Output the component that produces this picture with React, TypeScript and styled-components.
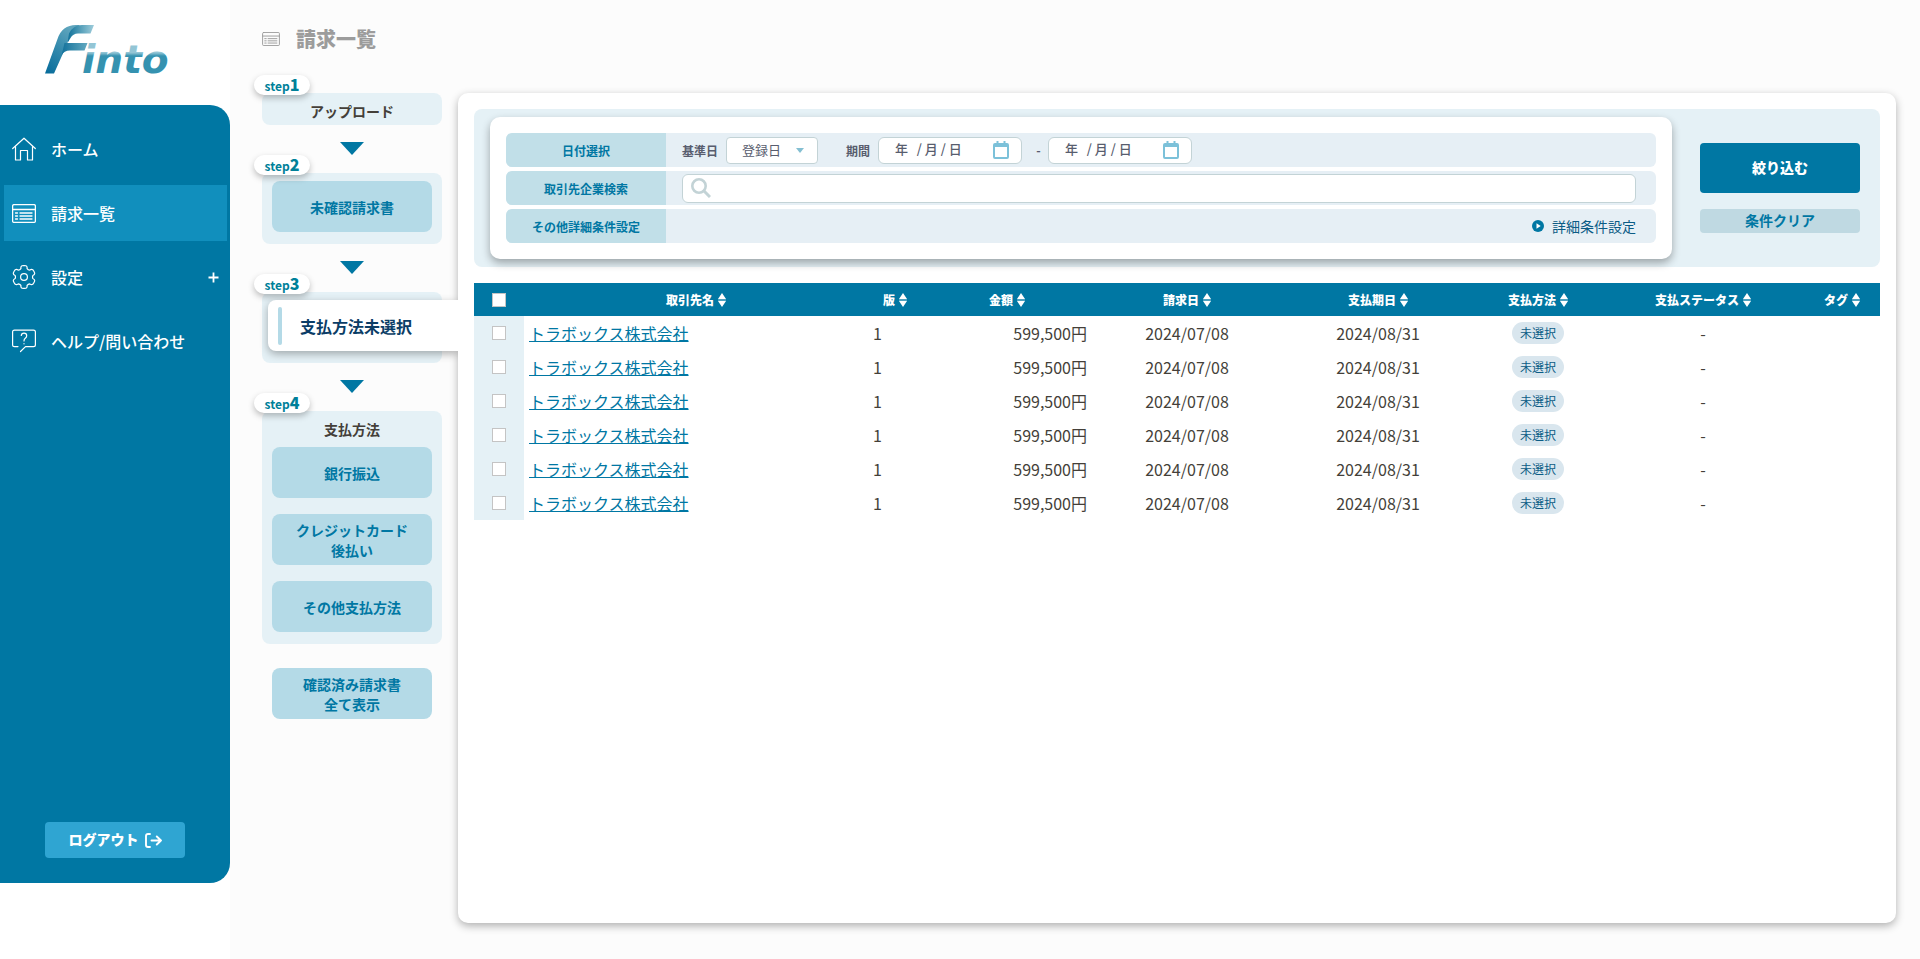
import React from "react";
import styled, { createGlobalStyle, css } from "styled-components";

const color = {
  primary: "#0077a3",
  primaryActive: "#118fbd",
  navy: "#0b3d66",
  teal: "#008099",
  text: "#443f39",
  formText: "#585d6e",
  pale: "#e5f1f6",
  rowPale: "#e6eff5",
  button: "#b4dae7",
  label: "#c1dfe8",
  border: "#c3d3d6",
};

const GlobalStyle = createGlobalStyle`
  *, *::before, *::after { box-sizing: border-box; }
  body {
    margin: 0;
    background: #fcfcfc;
    color: ${color.text};
    font-family: "Noto Sans CJK JP", "Noto Sans", sans-serif;
    font-size: 16px;
    line-height: 24px;
  }
  button, input, select { font-family: inherit; margin: 0; }
  h1, p { margin: 0; }
`;

const Layout = styled.div`
  display: flex;
  min-height: 100vh;
`;

/* ---------- Sidebar ---------- */

const Sidebar = styled.aside`
  display: flex;
  flex-direction: column;
  flex: none;
  width: 230px;
  padding-bottom: 76px;
  background: #fff;
`;

const LogoLink = styled.a`
  display: block;
  height: 105px;
  padding: 20px 0 0 40px;
  svg { display: block; }
`;

const NavPanel = styled.nav`
  display: flex;
  flex: 1;
  flex-direction: column;
  justify-content: space-between;
  padding: 16px 0 25px;
  border-radius: 0 20px 20px 0;
  background: ${color.primary};
`;

const NavList = styled.ul`
  display: flex;
  flex-direction: column;
  gap: 8px;
  margin: 0;
  padding: 0 3px 0 4px;
  list-style: none;
`;

const NavLink = styled.a<{ $active?: boolean }>`
  display: flex;
  align-items: center;
  gap: 15px;
  height: 56px;
  padding: 0 8px;
  color: #fff;
  font-weight: 500;
  text-decoration: none;
  background: ${(p) => (p.$active ? color.primaryActive : "transparent")};
  svg { flex: none; }
`;

const NavText = styled.span`
  flex: 1;
`;

const LogoutButton = styled.button`
  display: flex;
  align-items: center;
  justify-content: center;
  gap: 6px;
  align-self: center;
  width: 140px;
  height: 36px;
  padding: 0 0 2px;
  border: 0;
  border-radius: 4px;
  background: #2fa5d2;
  color: #fff;
  font-size: 14px;
  font-weight: 900;
  svg { margin-top: 2px; }
`;

/* ---------- Main ---------- */

const Main = styled.main`
  display: flex;
  flex: 1;
  flex-direction: column;
  min-width: 0;
  padding: 24px 24px 36px 32px;
`;

const PageHeader = styled.header`
  display: flex;
  align-items: center;
  gap: 16px;
  height: 30px;
  color: #9c9c9c;
`;

const PageTitle = styled.h1`
  font-size: 20px;
  font-weight: 900;
  line-height: 30px;
`;

const Body = styled.div`
  display: flex;
  flex: 1;
  gap: 16px;
  margin-top: 39px;
`;

/* ---------- Steps ---------- */

const Steps = styled.div`
  display: flex;
  flex: none;
  flex-direction: column;
  width: 180px;
`;

const StepBox = styled.section<{ $title?: boolean }>`
  position: relative;
  display: flex;
  flex-direction: column;
  gap: 16px;
  padding: 8px 10px 12px;
  border-radius: 8px;
  background: ${color.pale};
  ${(p) => p.$title && css`padding: 6px 10px 2px;`}
`;

const StepBadge = styled.span`
  position: absolute;
  top: -18px;
  left: -8px;
  width: 56px;
  height: 20px;
  border-radius: 10px;
  background: #fff;
  box-shadow: 0 3px 6px rgba(0, 0, 0, 0.25);
  color: ${color.teal};
  font-size: 12px;
  font-weight: 700;
  line-height: 18px;
  text-align: center;
  b { font-size: 16px; }
`;

const StepTitle = styled.p`
  font-size: 14px;
  font-weight: 700;
  text-align: center;
`;

const MethodGroup = styled.div`
  display: flex;
  flex-direction: column;
  gap: 8px;
  ${StepTitle} { line-height: 20px; }
`;

const StepButton = styled.button`
  width: 160px;
  height: 51px;
  padding: 0;
  border: 0;
  border-radius: 8px;
  background: ${color.button};
  color: ${color.primary};
  font-size: 14px;
  font-weight: 700;
  line-height: 20px;
`;

const CurrentStepButton = styled.button`
  position: relative;
  z-index: 2;
  display: flex;
  align-items: center;
  gap: 18px;
  height: 51px;
  margin: 0 -26px 0 -4px;
  padding: 0 10px;
  border: 0;
  border-radius: 8px 0 0 8px;
  background: #fff;
  box-shadow: 0 3px 8px rgba(0, 0, 0, 0.3);
  clip-path: inset(-12px 0 -16px -12px);
  color: ${color.navy};
  font-size: 16px;
  font-weight: 700;
  &::before {
    content: "";
    width: 4px;
    height: 38px;
    border-radius: 2px;
    background: ${color.button};
  }
`;

const StepArrow = styled.div`
  display: flex;
  justify-content: center;
  height: 48px;
  padding-top: 17px;
  &::before {
    content: "";
    height: 0;
    border: 12px solid transparent;
    border-top: 13px solid ${color.primary};
    border-bottom: 0;
  }
`;

const AllInvoices = styled.div`
  padding: 24px 10px 0;
`;

/* ---------- Card and filter ---------- */

const Card = styled.section`
  position: relative;
  z-index: 1;
  flex: 1;
  min-width: 0;
  padding: 16px;
  border-radius: 10px;
  background: #fff;
  box-shadow: 0 3px 8px rgba(0, 0, 0, 0.3);
`;

const Filter = styled.form`
  display: flex;
  gap: 28px;
  padding: 8px 20px 8px 16px;
  border-radius: 8px;
  background: ${color.pale};
`;

const FilterPanel = styled.div`
  display: flex;
  flex: 1;
  flex-direction: column;
  gap: 4px;
  min-width: 0;
  padding: 16px;
  border-radius: 10px;
  background: #fff;
  box-shadow: 0 4px 8px rgba(0, 0, 0, 0.32);
`;

const FilterRow = styled.div`
  display: flex;
  height: 34px;
  border-radius: 6px;
  overflow: hidden;
  background: ${color.rowPale};
`;

const FilterLabel = styled.label`
  flex: none;
  width: 160px;
  padding-top: 1px;
  background: ${color.label};
  color: ${color.primary};
  font-size: 12px;
  font-weight: 700;
  line-height: 34px;
  text-align: center;
`;

const FilterContent = styled.div<{ $end?: boolean }>`
  display: flex;
  flex: 1;
  align-items: center;
  justify-content: ${(p) => (p.$end ? "flex-end" : "flex-start")};
  padding: 0 20px 0 16px;
`;

const FieldLabel = styled.label`
  margin-right: 8px;
  padding-top: 1px;
  color: ${color.formText};
  font-size: 12px;
  font-weight: 700;
`;

const SelectWrap = styled.div`
  position: relative;
  margin-right: 28px;
  &::after {
    content: "";
    position: absolute;
    top: 11px;
    right: 14px;
    border: 4px solid transparent;
    border-top: 5px solid #84bfd2;
    border-bottom: 0;
    pointer-events: none;
  }
`;

const Select = styled.select`
  display: block;
  width: 92px;
  height: 27px;
  padding: 0 0 2px 15px;
  appearance: none;
  border: 1px solid ${color.border};
  border-radius: 4px;
  background: #fff;
  color: ${color.formText};
  font-size: 13px;
`;

const DateField = styled.div`
  display: flex;
  align-items: center;
  width: 144px;
  height: 27px;
  padding: 0 12px 0 16px;
  border: 1px solid ${color.border};
  border-radius: 6px;
  background: #fff;
  svg { flex: none; }
`;

const DateInput = styled.input`
  flex: 1;
  min-width: 0;
  padding: 0 0 2px;
  border: 0;
  background: transparent;
  font-size: 13px;
  font-weight: 500;
  line-height: 20px;
  outline: none;
  &::placeholder { color: ${color.formText}; opacity: 1; white-space: pre; }
`;

const RangeDash = styled.span`
  width: 26px;
  padding-left: 7px;
  color: ${color.formText};
  font-size: 12px;
  font-weight: 700;
  text-align: center;
`;

const SearchField = styled.div`
  display: flex;
  flex: 1;
  align-items: center;
  gap: 8px;
  height: 29px;
  padding: 0 8px;
  border: 1px solid ${color.border};
  border-radius: 6px;
  background: #fff;
`;

const SearchInput = styled.input`
  flex: 1;
  height: 24px;
  padding: 0;
  border: 0;
  outline: none;
  background: transparent;
  font-size: 14px;
`;

const DetailButton = styled.button`
  display: flex;
  align-items: center;
  gap: 8px;
  padding: 0;
  border: 0;
  background: none;
  color: #0b5c85;
  font-size: 14px;
`;

const FilterActions = styled.div`
  display: flex;
  flex: none;
  flex-direction: column;
  gap: 16px;
  width: 160px;
  padding-top: 26px;
`;

const SubmitButton = styled.button`
  height: 50px;
  padding: 0 0 2px;
  border: 0;
  border-radius: 4px;
  background: ${color.primary};
  color: #fff;
  font-size: 14px;
  font-weight: 900;
`;

const ClearButton = styled.button`
  height: 24px;
  padding: 0 0 2px;
  border: 0;
  border-radius: 4px;
  background: #bfd9e2;
  color: ${color.primary};
  font-size: 14px;
  font-weight: 700;
  line-height: 20px;
`;

/* ---------- Table ---------- */

const Table = styled.table`
  width: 100%;
  margin-top: 16px;
  border-collapse: collapse;
  table-layout: fixed;
`;

const HeadCell = styled.th`
  height: 33px;
  padding: 0;
  background: ${color.primary};
  color: #fff;
  font-size: 12px;
  font-weight: 700;
  line-height: 20px;
`;

const SortButton = styled.button`
  display: inline-flex;
  align-items: center;
  gap: 4px;
  padding: 0;
  border: 0;
  background: none;
  color: inherit;
  font-size: 12px;
  font-weight: 900;
  line-height: 20px;
  white-space: nowrap;
`;

const Cell = styled.td<{ $align?: "left" | "center" | "right" }>`
  height: 34px;
  padding: 0 5px;
  text-align: ${(p) => p.$align || "center"};
  white-space: nowrap;
`;

const CheckCell = styled.td`
  padding: 0;
  background: ${color.pale};
  text-align: center;
`;

const Checkbox = styled.input.attrs({ type: "checkbox" })`
  display: block;
  width: 14px;
  height: 14px;
  margin: 0 auto;
  appearance: none;
  border: 1px solid #c4c4c4;
  background: #fff;
  &:checked { background: ${color.primaryActive}; }
`;

const CompanyLink = styled.a`
  color: ${color.primary};
  text-decoration: underline;
`;

const StatusPill = styled.span`
  display: block;
  width: 52px;
  height: 22px;
  margin: 0 auto;
  border-radius: 11px;
  background: #d9e6ee;
  color: #0b5c85;
  font-size: 12px;
  line-height: 22px;
`;

/* ---------- Icons ---------- */

const Logo = () => (
  <svg width="150" height="72" viewBox="40 20 150 72" role="img" aria-label="Finto">
    <defs>
      <linearGradient id="stem" x1="0" y1="1" x2="0.6" y2="0">
        <stop offset="0" stopColor="#056b9a" />
        <stop offset="0.5" stopColor="#2f87ab" />
        <stop offset="1" stopColor="#5fa5bd" />
      </linearGradient>
      <linearGradient id="ribbon" x1="0" y1="0" x2="1" y2="0">
        <stop offset="0" stopColor="#0f7099" />
        <stop offset="0.4" stopColor="#4796b3" />
        <stop offset="1" stopColor="#9fcddb" />
      </linearGradient>
      <linearGradient id="wing" x1="0" y1="0" x2="1" y2="0">
        <stop offset="0" stopColor="#12719b" />
        <stop offset="1" stopColor="#64a9c0" />
      </linearGradient>
      <linearGradient id="word" x1="0" y1="0" x2="0" y2="1">
        <stop offset="0.35" stopColor="#93c5d5" />
        <stop offset="0.42" stopColor="#3592b0" />
      </linearGradient>
    </defs>
    <path d="M45 73.500L57.500 39Q62 25 76 25H80Q72 30 68 41L64.500 50L54 73.500Z" fill="url(#stem)" />
    <path d="M69 33.500Q73 25 82 25H94L90.500 33.500H78Q73 33.500 70.500 38L67.500 43Z" fill="url(#ribbon)" />
    <path d="M64.500 43H87.500L84.500 50.500H70Q64 50.500 61.500 55.500Z" fill="url(#wing)" />
    <text
      x="82"
      y="73"
      fill="url(#word)"
      fontFamily="DejaVu Sans, sans-serif"
      fontSize="39"
      fontStyle="oblique"
      fontWeight="700"
    >
      into
    </text>
  </svg>
);

const HomeIcon = () => (
  <svg width="24" height="24" viewBox="0 0 24 24" fill="none" stroke="currentColor" strokeWidth="1.200" strokeLinejoin="round" strokeLinecap="round">
    <path d="M.7 11.500L12 1.200L23.300 11.500" />
    <path d="M3.500 9.500V23H8.500V13.500H15.500V23H20.500V9.500" />
  </svg>
);

const ListIcon = ({ width = 24 }: { width?: number }) => (
  <svg width={width} height={Math.round((width * 19) / 24)} viewBox="0 0 24 19" fill="none" stroke="currentColor" strokeWidth="1.300" strokeLinecap="round">
    <rect x=".6" y=".6" width="22.800" height="17.800" rx="1.500" />
    <path d="M.6 5.500H23.400M3.500 9H5.500M8 9H20M3.500 12H5.500M8 12H20M3.500 15H5.500M8 15H20" />
  </svg>
);

const polar = (radius: number, degrees: number) => {
  const a = (degrees * Math.PI) / 180;
  return `${(12 + radius * Math.cos(a)).toFixed(2)} ${(12 + radius * Math.sin(a)).toFixed(2)}`;
};

const gearPath =
  [0, 1, 2, 3, 4, 5]
    .map((k) => {
      const a = k * 60 - 90;
      return `${k ? "L" : "M"}${polar(9, a - 20)}Q${polar(11, a - 18)} ${polar(11.4, a - 10)}A11.400 11.400 0 0 1 ${polar(11.4, a + 10)}Q${polar(11, a + 18)} ${polar(9, a + 20)}Q${polar(8.2, a + 30)} ${polar(9, a + 40)}`;
    })
    .join("") + "Z";

const GearIcon = () => (
  <svg width="24" height="24" viewBox="0 0 24 24" fill="none" stroke="currentColor" strokeWidth="1.200" strokeLinejoin="round">
    <path d={gearPath} />
    <circle cx="12" cy="12" r="3.400" />
  </svg>
);

const HelpIcon = () => (
  <svg width="24" height="24" viewBox="0 0 24 24" fill="none" stroke="currentColor" strokeWidth="1.200" strokeLinecap="round" strokeLinejoin="round">
    <path d="M6 17.600H2.500Q.6 17.600 .6 15.700V3Q.6 1.100 2.500 1.100H21.500Q23.400 1.100 23.400 3V15.700Q23.400 17.600 21.500 17.600H13.500L8.500 22.500" />
    <path d="M9.300 6.500Q9.500 4.200 12 4.200Q14.700 4.200 14.700 6.800Q14.700 8.300 13.300 9.200Q12 10 12 12" />
    <path d="M12 14.600V14.800" />
  </svg>
);

const PlusIcon = () => (
  <svg width="11" height="11" viewBox="0 0 11 11" stroke="currentColor" strokeWidth="1.800">
    <path d="M5.500 .5V10.500M.5 5.500H10.500" />
  </svg>
);

const LogoutIcon = () => (
  <svg width="17" height="15" viewBox="0 0 17 15" fill="none" stroke="currentColor" strokeWidth="1.900" strokeLinecap="round" strokeLinejoin="round">
    <path d="M5 1H3Q1 1 1 3V12Q1 14 3 14H5M6.500 7.500H16M11.800 3.500L16 7.500L11.800 11.500" />
  </svg>
);

const CalendarIcon = () => (
  <svg width="16" height="18" viewBox="0 0 16 18" fill="none" stroke="#7cc1d9">
    <rect x="1" y="3" width="14" height="14" rx="1" strokeWidth="2" />
    <path d="M1 4.500H15" strokeWidth="3" />
    <path d="M4.500 0V4M11.500 0V4" strokeWidth="2" />
  </svg>
);

const SearchIcon = () => (
  <svg width="20" height="20" viewBox="0 0 20 20" fill="none" stroke="#c3d3d6" strokeWidth="2.600">
    <circle cx="8" cy="8" r="6.700" />
    <path d="M12.800 12.800L19 19" strokeWidth="3" />
  </svg>
);

const PlayIcon = () => (
  <svg width="12" height="12" viewBox="0 0 12 12">
    <circle cx="6" cy="6" r="6" fill={color.primary} />
    <path d="M4.500 3.300L8.700 6L4.500 8.700Z" fill="#fff" />
  </svg>
);

const SortIcon = () => (
  <svg width="8" height="14" viewBox="0 0 8 14" fill="#fff">
    <path d="M4 0L8 6H0ZM4 14L8 8H0Z" />
    <path d="M0 6H8V8H0Z" opacity=".3" />
  </svg>
);

/* ---------- Data ---------- */

const navItems = [
  { label: "ホーム", icon: <HomeIcon /> },
  { label: "請求一覧", icon: <ListIcon />, active: true },
  { label: "設定", icon: <GearIcon />, expandable: true },
  { label: "ヘルプ/問い合わせ", icon: <HelpIcon /> },
];

const columns = [
  { label: "取引先名", width: 344 },
  { label: "版", width: 54 },
  { label: "金額", width: 170 },
  { label: "請求日", width: 190 },
  { label: "支払期日", width: 192 },
  { label: "支払方法", width: 128 },
  { label: "支払ステータス", width: 202 },
  { label: "タグ", width: 76 },
];

const invoices = Array.from({ length: 6 }, (_, i) => ({
  id: i + 1,
  company: "トラボックス株式会社",
  version: 1,
  amount: "599,500円",
  issued: "2024/07/08",
  due: "2024/08/31",
  method: "未選択",
  status: "-",
}));

const Step = ({ n, title, children }: { n: number; title?: boolean; children: React.ReactNode }) => (
  <StepBox $title={title}>
    <StepBadge>
      step<b>{n}</b>
    </StepBadge>
    {children}
  </StepBox>
);

const DatePicker = ({ id, label }: { id: string; label: string }) => (
  <DateField>
    <DateInput id={id} aria-label={label} placeholder="年   / 月 / 日" />
    <CalendarIcon />
  </DateField>
);

export default function App() {
  return (
    <Layout>
      <GlobalStyle />
      <Sidebar>
        <LogoLink href="#">
          <Logo />
        </LogoLink>
        <NavPanel>
          <NavList>
            {navItems.map((item) => (
              <li key={item.label}>
                <NavLink href="#" $active={item.active}>
                  {item.icon}
                  <NavText>{item.label}</NavText>
                  {item.expandable && <PlusIcon />}
                </NavLink>
              </li>
            ))}
          </NavList>
          <LogoutButton type="button">
            ログアウト
            <LogoutIcon />
          </LogoutButton>
        </NavPanel>
      </Sidebar>

      <Main>
        <PageHeader>
          <ListIcon width={18} />
          <PageTitle>請求一覧</PageTitle>
        </PageHeader>

        <Body>
          <Steps>
            <Step n={1} title>
              <StepTitle>アップロード</StepTitle>
            </Step>
            <StepArrow />
            <Step n={2}>
              <StepButton type="button">未確認請求書</StepButton>
            </Step>
            <StepArrow />
            <Step n={3}>
              <CurrentStepButton type="button">支払方法未選択</CurrentStepButton>
            </Step>
            <StepArrow />
            <Step n={4}>
              <MethodGroup>
                <StepTitle>支払方法</StepTitle>
                <StepButton type="button">銀行振込</StepButton>
              </MethodGroup>
              <StepButton type="button">
                クレジットカード
                <br />
                後払い
              </StepButton>
              <StepButton type="button">その他支払方法</StepButton>
            </Step>
            <AllInvoices>
              <StepButton type="button">
                確認済み請求書
                <br />
                全て表示
              </StepButton>
            </AllInvoices>
          </Steps>

          <Card>
            <Filter onSubmit={(e) => e.preventDefault()}>
              <FilterPanel>
                <FilterRow>
                  <FilterLabel as="span">日付選択</FilterLabel>
                  <FilterContent>
                    <FieldLabel htmlFor="base">基準日</FieldLabel>
                    <SelectWrap>
                      <Select id="base" defaultValue="登録日">
                        <option>登録日</option>
                      </Select>
                    </SelectWrap>
                    <FieldLabel htmlFor="from">期間</FieldLabel>
                    <DatePicker id="from" label="期間の開始日" />
                    <RangeDash>-</RangeDash>
                    <DatePicker id="to" label="期間の終了日" />
                  </FilterContent>
                </FilterRow>
                <FilterRow>
                  <FilterLabel htmlFor="company">取引先企業検索</FilterLabel>
                  <FilterContent>
                    <SearchField>
                      <SearchIcon />
                      <SearchInput id="company" type="text" />
                    </SearchField>
                  </FilterContent>
                </FilterRow>
                <FilterRow>
                  <FilterLabel as="span">その他詳細条件設定</FilterLabel>
                  <FilterContent $end>
                    <DetailButton type="button">
                      <PlayIcon />
                      詳細条件設定
                    </DetailButton>
                  </FilterContent>
                </FilterRow>
              </FilterPanel>
              <FilterActions>
                <SubmitButton type="submit">絞り込む</SubmitButton>
                <ClearButton type="reset">条件クリア</ClearButton>
              </FilterActions>
            </Filter>

            <Table>
              <colgroup>
                <col width={50} />
                {columns.map((c) => (
                  <col key={c.label} width={c.width} />
                ))}
              </colgroup>
              <thead>
                <tr>
                  <HeadCell>
                    <Checkbox aria-label="全て選択" />
                  </HeadCell>
                  {columns.map((c) => (
                    <HeadCell key={c.label} scope="col">
                      <SortButton type="button">
                        {c.label}
                        <SortIcon />
                      </SortButton>
                    </HeadCell>
                  ))}
                </tr>
              </thead>
              <tbody>
                {invoices.map((row) => (
                  <tr key={row.id}>
                    <CheckCell>
                      <Checkbox aria-label={`${row.company} ${row.id}`} />
                    </CheckCell>
                    <Cell $align="left">
                      <CompanyLink href="#">{row.company}</CompanyLink>
                    </Cell>
                    <Cell $align="left">{row.version}</Cell>
                    <Cell $align="right">{row.amount}</Cell>
                    <Cell>{row.issued}</Cell>
                    <Cell>{row.due}</Cell>
                    <Cell>
                      <StatusPill>{row.method}</StatusPill>
                    </Cell>
                    <Cell>{row.status}</Cell>
                    <Cell />
                  </tr>
                ))}
              </tbody>
            </Table>
          </Card>
        </Body>
      </Main>
    </Layout>
  );
}
